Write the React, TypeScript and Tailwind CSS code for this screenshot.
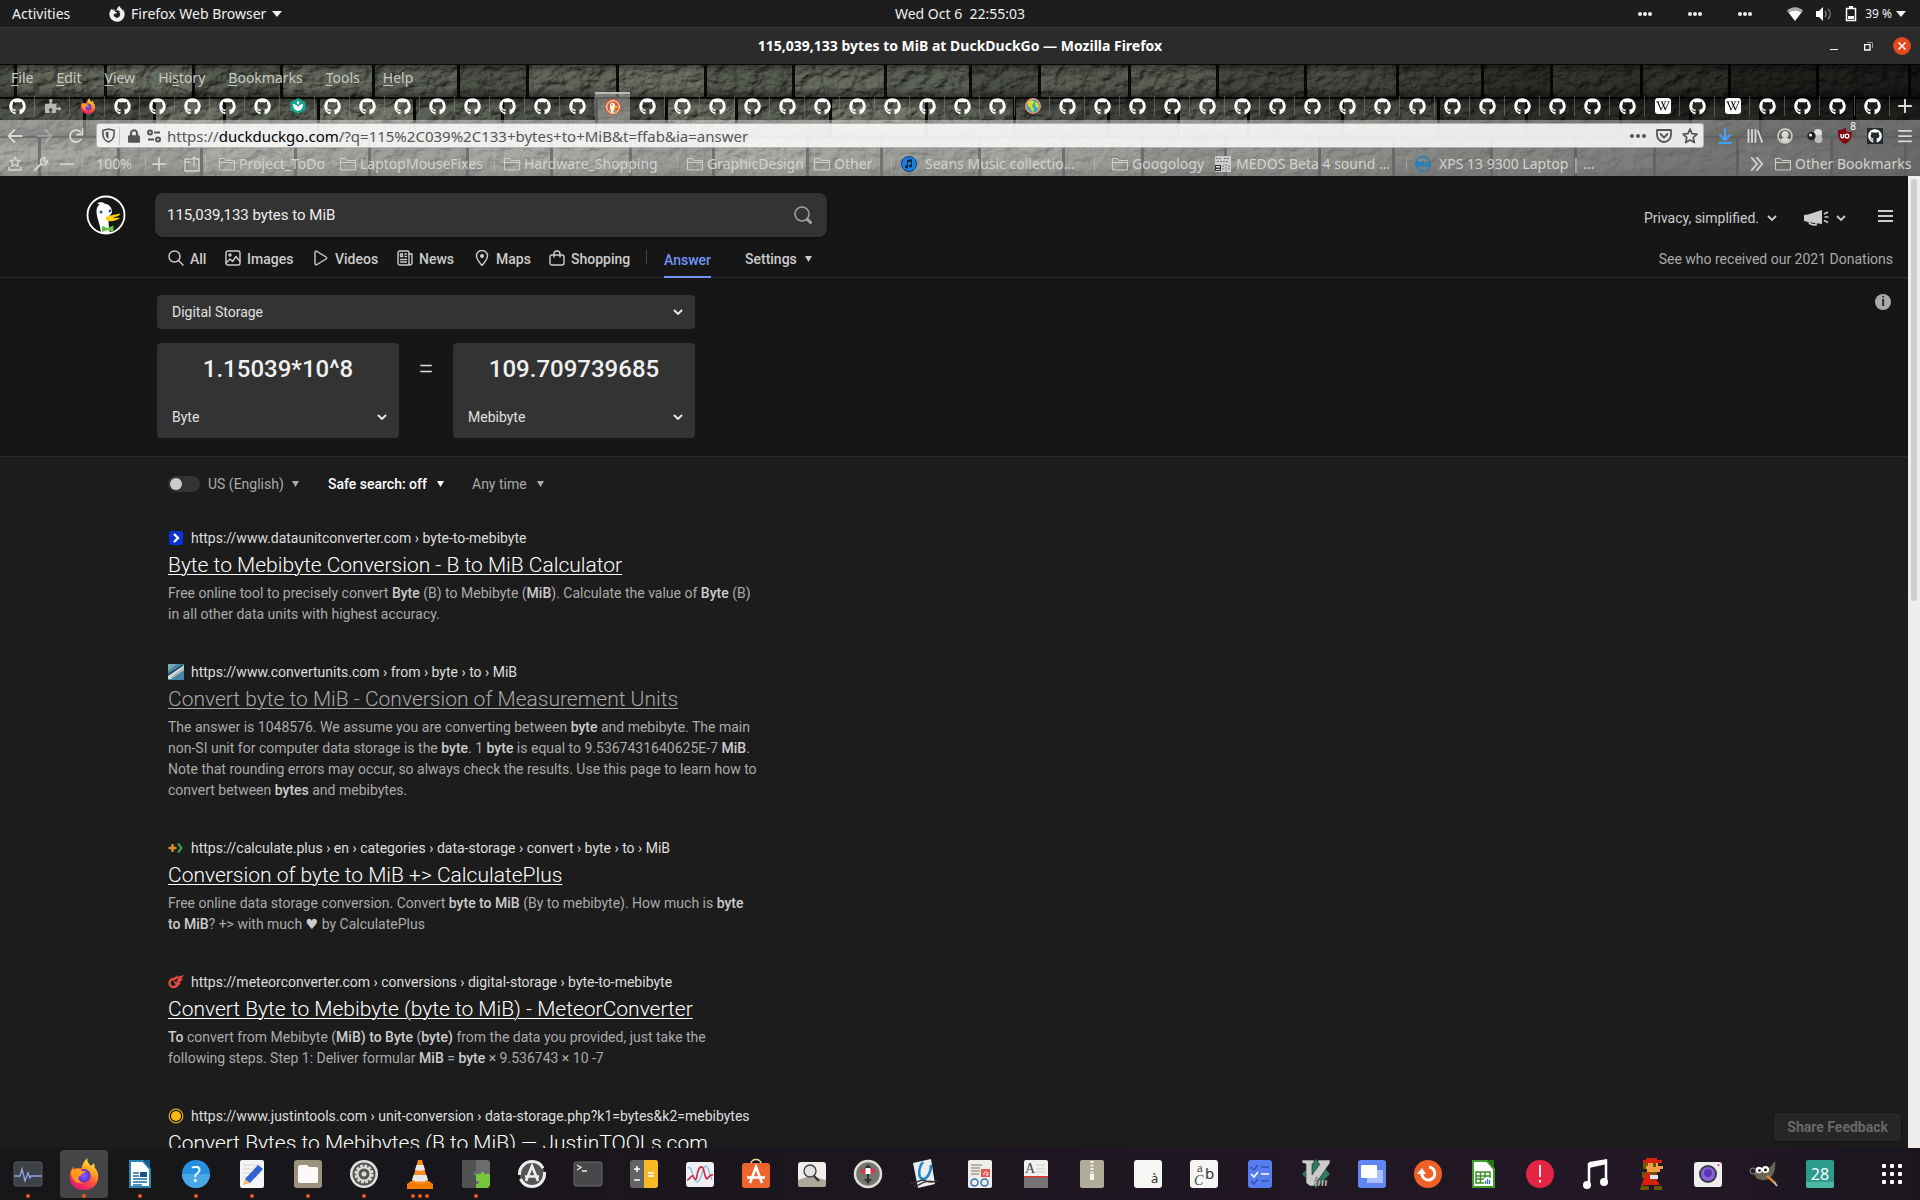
import type { ReactNode } from "react";
import { FaGithub, FaPuzzlePiece, FaLock, FaFirefoxBrowser, FaWikipediaW } from "react-icons/fa";

const UI = "font-['Noto_Sans',sans-serif]";
const WEB = "font-['Roboto',sans-serif]";

/* ---------- stone wall behind the browser chrome ---------- */

const WALL = [
  { y: 1, h: 32, joints: [15, 105, 193, 281, 373, 458], tones: ["#656a5d", "#6e7365", "#5a5f53", "#686d60", "#60655a", "#51564b"] },
  { y: 35, h: 37, joints: [84, 154, 224, 318, 414, 502], tones: ["#4b5046", "#6f7467", "#5d6256", "#757a6b", "#5f6458", "#545950"] },
  { y: 74, h: 38, joints: [39, 118, 201, 295, 369, 467], tones: ["#696e62", "#585d52", "#6f7468", "#64695c", "#5b6055", "#6b7064"] },
];

function StoneWall() {
  return (
    <svg className="absolute inset-0 h-full w-full" aria-hidden="true">
      <defs>
        <filter id="rough" x="0" y="0" width="100%" height="100%" colorInterpolationFilters="sRGB">
          <feTurbulence type="fractalNoise" baseFrequency="0.07 0.1" numOctaves="5" seed="4" result="n" />
          <feDiffuseLighting in="n" surfaceScale="4" lightingColor="#ffffff" result="l">
            <feDistantLight azimuth="225" elevation="62" />
          </feDiffuseLighting>
          <feBlend in="SourceGraphic" in2="l" mode="multiply" />
        </filter>
        <linearGradient id="bevel" x1="0" y1="0" x2="0" y2="1">
          <stop offset="0" stopColor="#000" stopOpacity="0.35" />
          <stop offset="0.25" stopColor="#000" stopOpacity="0" />
          <stop offset="0.7" stopColor="#000" stopOpacity="0" />
          <stop offset="1" stopColor="#000" stopOpacity="0.4" />
        </linearGradient>
        <pattern id="stones" width="512" height="112" patternUnits="userSpaceOnUse">
          <rect width="512" height="112" fill="#0a0b09" />
          {WALL.map((row) =>
            row.joints.map((j, i) => {
              const next = i + 1 < row.joints.length ? row.joints[i + 1] : row.joints[0] + 512;
              return [0, -512].map((o) => (
                <g key={`${row.y}-${i}-${o}`}>
                  <rect x={j + 2 + o} y={row.y} width={next - j - 3} height={row.h} rx="2" fill={row.tones[i]} />
                  <rect x={j + 2 + o} y={row.y} width={next - j - 3} height={row.h} rx="2" fill="url(#bevel)" />
                </g>
              ));
            }),
          )}
        </pattern>
        <linearGradient id="dusk">
          <stop offset="0.5" stopColor="#000" stopOpacity="0" />
          <stop offset="1" stopColor="#000" stopOpacity="0.75" />
        </linearGradient>
      </defs>
      <rect width="100%" height="100%" fill="url(#stones)" filter="url(#rough)" />
      <rect width="100%" height="100%" fill="url(#dusk)" />
    </svg>
  );
}

/* ---------- small glyphs ---------- */

function Caret({ className = "" }: { className?: string }) {
  return (
    <svg viewBox="0 0 10 6" className={`h-[6px] w-[10px] ${className}`} fill="currentColor" aria-hidden="true">
      <path d="M0 0h10L5 6z" />
    </svg>
  );
}

function SmallCaret({ className = "" }: { className?: string }) {
  return (
    <svg viewBox="0 0 7 6" className={`h-[6px] w-[7px] shrink-0 ${className}`} fill="currentColor" aria-hidden="true">
      <path d="M0 0h7L3.5 6z" />
    </svg>
  );
}

function Chevron({ className = "" }: { className?: string }) {
  return (
    <svg viewBox="0 0 10 6" className={`h-[6px] w-[10px] ${className}`} fill="none" stroke="currentColor" strokeWidth="1.8" aria-hidden="true">
      <path d="M1 1l4 4 4-4" />
    </svg>
  );
}

function Icon({ children, size = "size-4", box = "0 0 16 16", className = "" }: { children: ReactNode; size?: string; box?: string; className?: string }) {
  return (
    <svg viewBox={box} className={`${size} shrink-0 ${className}`} fill="none" stroke="currentColor" strokeWidth="1.4" strokeLinecap="round" strokeLinejoin="round" aria-hidden="true">
      {children}
    </svg>
  );
}

function FirefoxLogo({ size }: { size: string }) {
  return (
    <svg viewBox="0 0 32 36" className={size} aria-hidden="true">
      <defs>
        <linearGradient id="ffbody" x1="0.8" y1="0" x2="0.3" y2="1">
          <stop offset="0" stopColor="#fff44f" />
          <stop offset="0.35" stopColor="#ffa51f" />
          <stop offset="0.65" stopColor="#ff4a3c" />
          <stop offset="1" stopColor="#e5127f" />
        </linearGradient>
        <radialGradient id="ffglobe">
          <stop offset="0" stopColor="#9059ff" />
          <stop offset="1" stopColor="#5b2fd0" />
        </radialGradient>
      </defs>
      <path fill="url(#ffbody)" d="M20 0c-1 4 1 6 4 9l3-3c1 2 1 3 1 5 3 3 4 6 4 10 0 9-7 15-16 15S0 30 0 21c0-5 2-9 4-12 0 2 0 3 1 4 2-1 5-2 8-1 1-5 3-9 7-12z" />
      <circle cx="16" cy="20" r="7.5" fill="url(#ffglobe)" />
      <path fill="#ff9a1f" d="M1 16c2-5 7-5 11-3 1 2 4 2 6 2-1 2-3 2-4 3-2 1-2 3-4 3-1 3 1 6 5 7-7 2-13-4-14-12z" />
    </svg>
  );
}

function Duck({ className, body = "#de5833", ring = "#fff" }: { className: string; body?: string; ring?: string }) {
  return (
    <svg viewBox="0 0 40 40" className={className} aria-hidden="true">
      <circle cx="20" cy="20" r="18.500" fill={body} stroke={ring} strokeWidth="1.800" />
      <path fill="#fff" d="M15 37.500C14.500 30 10.500 23 10.500 16c0-3 1-5 3-6.500-1-1-2-1-2.500-1C13 6.500 17 7 18.500 8.500c5 1 7.500 4 7.500 8.500 0 2-3 3-3.500 6 0 4 0 8 1.500 15-3 .8-6 .6-9-.5z" />
      <circle cx="15" cy="17" r="1.500" fill="#2d4f8e" />
      <circle cx="24" cy="16" r="1.400" fill="#2d4f8e" />
      <path fill="#fdd20a" d="M20 22.500c3-3 8-2 14-4 1 1.500-3 3-7 4 2 .8 4 0 7 .6-3 3-10 4-13 2.400-1-1-2-2-1-3z" />
      <path fill="#65bc46" d="M16 31l5.500 2 6-2.500V37l-6-2-5.500 2z" />
    </svg>
  );
}

function Folder() {
  return (
    <Icon size="size-4" className="text-[#d0d0cb]">
      <path strokeWidth="1" d="M.5 13.500v-11h5l1.500 2h8.500v9zM.5 6.500h15" />
    </Icon>
  );
}

/* ---------- desktop top bar and window title ---------- */

function DesktopBar() {
  return (
    <header className={`${UI} grid h-7 shrink-0 grid-cols-3 items-center border-b border-[#3a3a3a] bg-[#1d1d1d] text-sm text-[#f0f0f0]`}>
      <div className="flex items-center pl-3">
        <button className="w-[97px] text-left">Activities</button>
        <button className="flex items-center gap-[6px]">
          <FaFirefoxBrowser className="size-4" />
          Firefox Web Browser
          <Caret />
        </button>
      </div>
      <button className="justify-self-center whitespace-pre">Wed Oct 6  22:55:03</button>
      <div className="flex items-center justify-end pr-[14px]">
        {[0, 1, 2].map((n) => (
          <button key={n} aria-label="Indicator" className="flex w-[50px] justify-center">
            <svg viewBox="0 0 14 4" className="h-1 w-[14px]" fill="currentColor"><circle cx="2" cy="2" r="2" /><circle cx="7" cy="2" r="2" /><circle cx="12" cy="2" r="2" /></svg>
          </button>
        ))}
        <button aria-label="System menu" className="flex items-center pl-[17px] text-xs">
          <svg viewBox="0 0 16 14" className="mr-[13px] h-[14px] w-4"><path fill="#aaa" d="M0 4C4-1 12-1 16 4l-8 9z" /><path fill="#fff" d="M2 6c3-3 9-3 12 0l-6 8z" /></svg>
          <svg viewBox="0 0 16 14" className="mr-[13px] h-[14px] w-4"><path fill="#fff" d="M0 4h3l4-4v14l-4-4H0z" /><path d="M9 4c1.500 2 1.500 4 0 6M12 2c3 3 3 7 0 10" fill="none" stroke="#888" strokeWidth="1.300" /></svg>
          <svg viewBox="0 0 12 16" className="mr-2 h-4 w-3"><path fill="none" stroke="#fff" strokeWidth="1.500" d="M1.500 2.500h9v12h-9z" /><path fill="#fff" d="M4 0h4v2H4zM3 10h6v3H3z" /></svg>
          39 %
          <Caret className="ml-1" />
        </button>
      </div>
    </header>
  );
}

function TitleBar() {
  return (
    <div className={`${UI} grid h-9 shrink-0 grid-cols-[120px_1fr_120px] items-center bg-[#2b2b2b] text-sm text-white`}>
      <span />
      <h1 className="text-center font-bold">115,039,133 bytes to MiB at DuckDuckGo — Mozilla Firefox</h1>
      <div className="flex items-center justify-end gap-4 pr-[9px]">
        <button aria-label="Minimize" className="flex size-[18px] items-end justify-center pb-[5px]"><span className="h-px w-2 bg-white" /></button>
        <button aria-label="Restore" className="flex size-[18px] items-center justify-center">
          <svg viewBox="0 0 9 9" className="size-[9px]" fill="none"><path stroke="#999" d="M3 .5h5.500V6" /><path stroke="#fff" strokeWidth="1.300" d="M.6 2.600h5.400v5.400H.6z" /></svg>
        </button>
        <button aria-label="Close" className="flex size-[18px] items-center justify-center rounded-full bg-[#e2491d]">
          <svg viewBox="0 0 8 8" className="size-2" stroke="#fff" strokeWidth="1.500"><path d="M.5.5l7 7M7.500.5l-7 7" /></svg>
        </button>
      </div>
    </div>
  );
}

/* ---------- browser chrome ---------- */

const MENUS = ["File", "Edit", "View", "History", "Bookmarks", "Tools", "Help"];
const MENU_KEYS = [0, 0, 0, 2, 0, 0, 0];

function tabGlyph(i: number) {
  if (i === 1) return <FaPuzzlePiece className="size-4 text-[#b8b8b8]" />;
  if (i === 2) return <FirefoxLogo size="size-4" />;
  if (i === 8)
    return (
      <svg viewBox="0 0 16 16" className="size-4"><path fill="#12a58c" d="M8 0l7.500 4v8L8 16 .5 12V4z" /><path fill="#fff" d="M8 13C4 12 3 9 3 6c2 0 4 1 5 3 1-2 3-3 5-3 0 3-1 6-5 7zM6.500 4.500L8 3l1.500 1.500L8 7z" /></svg>
    );
  if (i === 17)
    return (
      <svg viewBox="0 0 16 16" className="size-4"><circle cx="8" cy="8" r="8" fill="#de5833" /><circle cx="8" cy="8" r="6.300" fill="#de5833" stroke="#fff" /><path fill="#fff" d="M6 13.500C5.500 10 4.500 8 5 5.500 5.500 3 9.500 3 10 6c.2 1.500-.8 2-.8 3.500L10 13.500c-1 .5-3 .5-4 0z" /><circle cx="7" cy="6" r=".7" fill="#234" /><path fill="#fdd20a" d="M8.500 8c1.500-.8 3-.6 4.500-1-.5 2-3 3-4.500 2z" /><path fill="#65bc46" d="M8 11.500h3v2H8z" /></svg>
    );
  if (i === 29)
    return (
      <svg viewBox="0 0 16 16" className="size-4"><circle cx="8" cy="8" r="7.200" fill="#3aa6c9" stroke="#f09a6f" strokeWidth="1.500" /><path fill="#d9e021" d="M4 3c2-1 4-1 5 1 0 2-2 2-2 4l2 3-1 3c-2-1-2-4-4-5-2-2-1-5 0-6zM10 4l3 1 1 4-2 1-2-3z" /></svg>
    );
  if (i === 47 || i === 49)
    return <span className="flex size-4 items-center justify-center rounded-[3px] bg-white"><FaWikipediaW className="size-[14px] text-black" /></span>;
  return <FaGithub className="size-[17px] text-white" />;
}

function TabStrip() {
  return (
    <div role="tablist" className="flex h-7 items-stretch text-[#ddd]">
      {Array.from({ length: 54 }, (_, i) => (
        <button
          key={i}
          role="tab"
          aria-selected={i === 17}
          aria-label={`Tab ${i + 1}`}
          className={
            i === 17
              ? "flex w-[35px] min-w-0 items-center justify-center border-t-2 border-[#bbb] bg-white/35"
              : "flex w-[35px] min-w-0 items-center justify-center bg-[linear-gradient(#88888880,#88888880)] bg-[length:1px_20px] bg-right bg-no-repeat"
          }
        >
          {tabGlyph(i)}
        </button>
      ))}
      <button aria-label="New tab" className="flex flex-1 items-center justify-center">
        <Icon size="size-[14px]"><path strokeWidth="2.200" d="M8 1v14M1 8h14" /></Icon>
      </button>
    </div>
  );
}

function NavBar() {
  return (
    <div className="flex h-[31px] items-center text-[#d8d8d4]">
      <button aria-label="Back" className="flex w-[30px] justify-center"><Icon><path strokeWidth="1.800" d="M15 8H1.500M7.500 2l-6 6 6 6" /></Icon></button>
      <button aria-label="Forward" className="flex w-[30px] justify-center opacity-40"><Icon><path strokeWidth="1.800" d="M1 8h13.500M8.500 2l6 6-6 6" /></Icon></button>
      <button aria-label="Reload" className="flex w-8 justify-center"><Icon><path strokeWidth="1.800" d="M13 11.500A6 6 0 1 1 12.500 4M14.500 1v5.500H9" /></Icon></button>
      <div className="ml-1 flex h-[25px] min-w-0 flex-1 items-center rounded-[3px] border border-black/25 bg-white/85 text-[#555]">
        <span className="flex w-[22px] justify-center">
          <svg viewBox="0 0 14 16" className="h-[15px] w-[13px]"><path d="M7 1l6 1.500v4C13 11 10 14 7 15 4 14 1 11 1 6.500v-4z" fill="none" stroke="currentColor" strokeWidth="1.700" /><path d="M7 4v8C5 10.500 4 9 4 6.500V4.500z" fill="currentColor" /></svg>
        </span>
        <span className="h-[18px] w-px bg-black/15" />
        <FaLock className="ml-2 h-[14px] w-3" />
        <svg viewBox="0 0 14 14" className="mr-[6px] ml-[7px] size-[14px]" fill="none" stroke="currentColor" strokeWidth="2"><circle cx="3" cy="3.500" r="2" /><path d="M7 3.500h6M1 10.500h6" /><circle cx="11" cy="10.500" r="2" /></svg>
        <div className={`${UI} relative min-w-0 flex-1 text-[15px]`}>
          <p className="leading-5 whitespace-pre">https://<b className="font-normal text-black">duckduckgo.com</b>/?q=115%2C039%2C133+bytes+to+MiB&amp;t=ffab&amp;ia=answer</p>
          <input aria-label="Address" className="absolute inset-0 w-full bg-transparent outline-none" />
        </div>
        <button aria-label="Page actions" className="flex w-[26px] justify-center"><svg viewBox="0 0 16 4" className="h-1 w-4" fill="currentColor"><circle cx="2" cy="2" r="2" /><circle cx="8" cy="2" r="2" /><circle cx="14" cy="2" r="2" /></svg></button>
        <button aria-label="Save to Pocket" className="flex w-[26px] justify-center"><Icon><path strokeWidth="1.800" d="M1 2h14v5a7 7 0 0 1-14 0zM4.500 6L8 9.500 11.500 6" /></Icon></button>
        <button aria-label="Bookmark this page" className="flex w-[26px] justify-center"><Icon><path strokeWidth="1.700" d="M8 1l2 4.700 5 .5-3.800 3.400 1.200 5L8 12l-4.400 2.600 1.200-5L1 6.200l5-.5z" /></Icon></button>
      </div>
      <div className="flex pl-[6px]">
        <button aria-label="Downloads" className="flex w-[30px] items-center justify-center text-[#45a1ff]"><Icon><path strokeWidth="2" d="M8 1v10M3 7l5 5 5-5M2 15h12" /></Icon></button>
        <button aria-label="Library" className="flex w-[30px] items-center justify-center"><Icon><path strokeWidth="1.800" d="M1.500 2v12M5 2v12M8.500 2v12M11 3l4 11" /></Icon></button>
        <button aria-label="Account" className="flex w-[30px] items-center justify-center"><Icon><circle cx="8" cy="8" r="7" /><circle cx="8" cy="6.500" r="2.800" fill="currentColor" /><path fill="currentColor" d="M4 12c1-2 7-2 8 0-2 2-6 2-8 0z" /></Icon></button>
        <button aria-label="Extension" className="flex w-[30px] items-center justify-center"><svg viewBox="0 0 16 16" className="size-4"><circle cx="11" cy="5" r="4" fill="#ddd" /><circle cx="11.500" cy="11" r="4" fill="#bbb" /><circle cx="4.500" cy="8" r="4.200" fill="#222" /><circle cx="3.500" cy="7" r="1.500" fill="#eee" /></svg></button>
        <button aria-label="uBlock Origin" className="relative flex w-[30px] items-center justify-center">
          <svg viewBox="0 0 16 16" className="size-4"><path fill="#800610" d="M8 0c2 1.500 4.500 2 7 2 0 7-1 11-7 14C2 13 1 9 1 2c2.500 0 5-.5 7-2z" /><path d="M4 6v2.500a1.300 1.300 0 0 0 2.600 0V6" fill="none" stroke="#fff" strokeWidth="1.400" /><circle cx="10" cy="8" r="1.900" fill="none" stroke="#fff" strokeWidth="1.400" /></svg>
          <span className={`${UI} absolute -top-2 right-0 rounded-xs bg-[#666] px-1 text-[10px] leading-[12px] text-white`}>8</span>
        </button>
        <button aria-label="GitHub" className="flex w-[30px] items-center justify-center"><span className="bg-[#24292e] p-px"><FaGithub className="size-[14px] text-white" /></span></button>
        <button aria-label="Menu" className="flex w-[30px] items-center justify-center"><Icon size="size-[14px]"><path strokeWidth="2" d="M1 2h14M1 8h14M1 14h14" /></Icon></button>
      </div>
    </div>
  );
}

function Rule() {
  return <span className="h-4 w-px shrink-0 bg-white/20" />;
}

function Mark({ width, icon, children }: { width: string; icon: ReactNode; children: ReactNode }) {
  return (
    <button className={`flex ${width} shrink-0 items-center gap-1 whitespace-nowrap`}>
      {icon}
      {children}
    </button>
  );
}

function BookmarksBar() {
  return (
    <div className={`${UI} flex h-[25px] items-center text-sm text-[#d3d3cf] [text-shadow:1px_1px_1px_#000]`}>
      <button aria-label="Bookmarks" className="flex w-[30px] justify-center"><Icon><path d="M8 1l1.500 3.200 3.500.4-2.600 2.300.8 3.400L8 8.600l-3.200 1.700.8-3.400L3 4.600l3.500-.4zM2 11v3h12v-3" /></Icon></button>
      <button aria-label="Tools" className="flex w-[22px] justify-center"><Icon><path strokeWidth="2.200" d="M2 14l6.500-6.500" /><path strokeWidth="1.800" d="M12.500 2a3.500 3.500 0 1 0 2 2.500L12 6l-1.500-1.500z" /></Icon></button>
      <button aria-label="Zoom out" className="flex w-[30px] justify-center"><Icon size="size-[14px]"><path strokeWidth="2" d="M1 8h14" /></Icon></button>
      <Rule />
      <button className="w-[62px] text-center">100%</button>
      <Rule />
      <button aria-label="Zoom in" className="flex w-[26px] justify-center"><Icon size="size-[14px]"><path strokeWidth="2" d="M8 1v14M1 8h14" /></Icon></button>
      <button aria-label="Open file" className="flex w-[33px] justify-end pr-[5px]"><Icon><path d="M6 3H1v12h14V3h-2M1 6h5M10 10V1M7.500 3.500L10 1l2.500 2.500" /></Icon></button>
      <Rule />
      <span className="w-[13px]" />
      <Mark width="w-[121px]" icon={<Folder />}>Project_ToDo</Mark>
      <Mark width="w-[154px]" icon={<Folder />}>LaptopMouseFixes</Mark>
      <Rule />
      <span className="w-[9px]" />
      <Mark width="w-[173px]" icon={<Folder />}>Hardware_Shopping</Mark>
      <Rule />
      <span className="w-[9px]" />
      <Mark width="w-[127px]" icon={<Folder />}>GraphicDesign</Mark>
      <Mark width="w-[77px]" icon={<Folder />}>Other</Mark>
      <Rule />
      <span className="w-[9px]" />
      <Mark
        width="w-[193px]"
        icon={<svg viewBox="0 0 16 16" className="mr-1 size-4"><circle cx="8" cy="8" r="7.500" fill="#1b7fe0" stroke="#0b3d87" /><path fill="#123" d="M6 4l5-1v7a1.500 1.500 0 1 1-1-1.500V5.500l-3 .7V11a1.500 1.500 0 1 1-1-1.500z" /></svg>}
      >
        Seans Music collectio…
      </Mark>
      <Rule />
      <span className="w-[17px]" />
      <Mark width="w-[103px]" icon={<Folder />}>Googology</Mark>
      <Mark
        width="w-[191px]"
        icon={<svg viewBox="0 0 16 16" className="mr-px size-4"><path fill="#ccc" d="M0 0h16v16H0z" /><path stroke="#777" d="M1 2.500h6M9 2.500h5M2 5.500h12M8 9v6M11 8v7M14 9v5" strokeDasharray="2 1" /><path fill="#333" d="M0 9h6v6H0z" /><path fill="#ddd" d="M1 10h4v1.500H1zM1 13h4v1H1z" /></svg>}
      >
        MEDOS Beta 4 sound …
      </Mark>
      <Rule />
      <span className="w-2" />
      <Mark
        width="w-[190px]"
        icon={<svg viewBox="0 0 16 16" className="mr-1 size-4"><circle cx="8" cy="8" r="7.300" fill="none" stroke="#0a80c8" strokeWidth="1.200" /><path stroke="#0a80c8" strokeWidth="1.400" fill="none" d="M2.500 6v4c3 0 3-4 0-4zM6.500 6v4M6.500 6H9M6.500 8H8.500M6.500 10H9M10.500 6v4h1.500M13 6v4h1.500" /></svg>}
      >
        XPS 13 9300 Laptop | …
      </Mark>
      <button aria-label="More bookmarks" className="ml-auto flex w-[25px] items-center"><Icon size="size-[14px]"><path strokeWidth="2" d="M2 1l6 7-6 7M8 1l6 7-6 7" /></Icon></button>
      <Mark width="w-[145px]" icon={<Folder />}>Other Bookmarks</Mark>
    </div>
  );
}

function BrowserChrome() {
  return (
    <div className="relative h-28 shrink-0 overflow-hidden bg-[#3a3d35]">
      <StoneWall />
      <div className="relative">
        <nav aria-label="Menu bar" className={`${UI} flex h-7 items-center gap-[23px] pl-[11px] text-sm text-[#c9c9c5] [text-shadow:1px_1px_1px_#000]`}>
          {MENUS.map((m, i) => (
            <button key={m}>
              {m.slice(0, MENU_KEYS[i])}
              <span className="underline underline-offset-2">{m[MENU_KEYS[i]]}</span>
              {m.slice(MENU_KEYS[i] + 1)}
            </button>
          ))}
        </nav>
        <TabStrip />
        <div className="bg-[linear-gradient(90deg,#ffffff6b,#ffffff6b_50%,#ffffff5c)]">
          <NavBar />
          <BookmarksBar />
        </div>
      </div>
    </div>
  );
}

/* ---------- search page ---------- */

const VERTICALS: { label: string; width: string; icon: ReactNode }[] = [
  { label: "All", width: "w-[57px]", icon: <><circle cx="6.500" cy="6.500" r="5.500" /><path d="M10.500 10.500L15 15" /></> },
  { label: "Images", width: "w-[88px]", icon: <><rect x="1" y="1" width="14" height="14" rx="2" /><circle cx="5" cy="5" r="1" /><path d="M1 13l4-4 2.500 2.500L11 6.500l4 5" /></> },
  { label: "Videos", width: "w-[84px]", icon: <path d="M2 2.500v11c0 1 1 1.500 2 1l9-5.500c1-.6 1-1.400 0-2L4 1.500c-1-.5-2 0-2 1z" /> },
  { label: "News", width: "w-[77px]", icon: <><rect x="1" y="1" width="11" height="14" rx="2" /><path d="M12 4h3v9c0 1-1 2-3 2M3.500 4h2v2.500h-2zM8 4h1.500M8 6.500h1.500M3.500 9.500h6M3.500 12h6" /></> },
  { label: "Maps", width: "w-[75px]", icon: <><path d="M8 15.500C5 12 2.500 9 2.500 6a5.500 5.500 0 0 1 11 0c0 3-2.500 6-5.500 9.500z" /><circle cx="8" cy="6" r="1.300" fill="currentColor" /></> },
  { label: "Shopping", width: "w-[97px]", icon: <><rect x="1" y="5" width="14" height="10" rx="2" /><path d="M5 7V4a3 3 0 0 1 6 0v3" /></> },
];

function SearchHeader() {
  return (
    <header className="flex border-b border-[#2b2b2b] pt-[17px]">
      <a href="#home" aria-label="Home" className="ml-[86px] h-10 w-[69px] pt-[2px]"><Duck className="size-10" body="#161616" /></a>
      <div>
        <form className="flex h-11 w-[672px] items-center rounded-lg bg-[#333] pr-[15px] pl-3 shadow-[0_1px_3px_#0006]">
          <input aria-label="Search" defaultValue="115,039,133 bytes to MiB" className="min-w-0 flex-1 bg-transparent text-[15px] text-[#eee] outline-none" />
          <button type="button" aria-label="Search" className="text-[#a3a3a3]">
            <Icon size="size-[18px]" box="0 0 18 18"><circle cx="8" cy="8" r="7" strokeWidth="1.500" /><path strokeWidth="3" d="M13.500 13.500l3 3" /></Icon>
          </button>
        </form>
        <nav className="flex h-10 items-center pl-[13px] text-sm font-medium text-[#ccc]">
          {VERTICALS.map((v) => (
            <a key={v.label} href={`#${v.label}`} className={`flex ${v.width} gap-[6px] pt-1`}>
              <Icon>{v.icon}</Icon>
              <span className="leading-[18px]">{v.label}</span>
            </a>
          ))}
          <span className="mr-[17px] h-[14px] w-px bg-[#444]" />
          <a href="#answer" className="-mb-px flex h-full items-center self-end border-b-2 border-[#7295f6] pt-[6px] text-[#7295f6]">Answer</a>
          <button className="ml-[34px] flex items-center gap-2 pt-1">Settings <SmallCaret /></button>
        </nav>
      </div>
      <div className="ml-auto flex flex-col items-end pr-[15px] text-sm">
        <div className="flex h-[50px] items-center text-[#ccc]">
          <button className="flex items-center gap-2">Privacy, simplified. <Chevron /></button>
          <button aria-label="Spread the word" className="ml-[27px] flex items-center gap-[6px]">
            <svg viewBox="0 0 26 16" className="h-4 w-[26px]" fill="currentColor"><path d="M0 5L4 4.500 18 0v14L4 12l-4-1z" /><path d="M5.500 11v2.500c2 1 4 1.500 6.500 1.500v-3M20 4l4-2M20.500 7h4M20 10.500l4 2" fill="none" stroke="currentColor" strokeWidth="1.600" /></svg>
            <Chevron />
          </button>
          <button aria-label="Menu" className="ml-8 flex flex-col gap-[3px] pb-1"><span className="h-[2px] w-[15px] bg-current" /><span className="h-[2px] w-[15px] bg-current" /><span className="h-[2px] w-[15px] bg-current" /></button>
        </div>
        <a href="#donations" className="pt-[6px] text-[#aaa]">See who received our 2021 Donations</a>
      </div>
    </header>
  );
}

function UnitPanel({ id, label, value, unit }: { id: string; label: string; value: string; unit: string }) {
  return (
    <div className="h-[95px] w-[242px] rounded bg-[#333]">
      <input aria-label={label} defaultValue={value} className="h-[52px] w-full bg-transparent text-center text-2xl font-medium text-[#f0f0f0] outline-none" />
      <UnitSelect id={id} label={`${label} unit`} value={unit} height="h-[43px]" />
    </div>
  );
}

function UnitSelect({ id, label, value, height }: { id: string; label: string; value: string; height: string }) {
  return (
    <div className="relative flex items-center">
      <select id={id} aria-label={label} className={`${height} w-full appearance-none rounded bg-[#333] pl-[15px] text-sm text-[#e0e0e0] outline-none`}>
        <option>{value}</option>
      </select>
      <Chevron className="pointer-events-none absolute right-3 text-[#eee]" />
    </div>
  );
}

function Converter() {
  return (
    <section className="flex justify-between border-b border-[#2b2b2b] pt-4 pr-[17px] pb-[18px] pl-[157px]">
      <div className="flex w-[538px] flex-col gap-[14px] pt-px">
        <UnitSelect id="kind" label="Quantity" value="Digital Storage" height="h-[34px]" />
        <div className="flex justify-between">
          <UnitPanel id="from" label="From" value="1.15039*10^8" unit="Byte" />
          <span className="pt-2 text-[28px] leading-9 font-light text-[#ddd]">=</span>
          <UnitPanel id="to" label="To" value="109.709739685" unit="Mebibyte" />
        </div>
      </div>
      <button aria-label="About this answer" className="flex size-4 items-center justify-center rounded-full bg-[#aaa] text-xs font-bold text-[#161616]">i</button>
    </section>
  );
}

function Filters() {
  return (
    <div className="flex h-4 items-center text-sm text-[#aaa]">
      <input
        type="checkbox"
        aria-label="Region filter"
        className="mr-2 h-4 w-8 appearance-none rounded-full bg-[#333] before:m-[2px] before:block before:size-3 before:rounded-full before:bg-[#ccc]"
      />
      <button className="flex w-[120px] items-center gap-2">US (English) <SmallCaret /></button>
      <button className="flex w-36 items-center gap-[10px] font-medium text-white">Safe search: off <SmallCaret /></button>
      <button className="flex items-center gap-[10px]">Any time <SmallCaret /></button>
    </div>
  );
}

const B = ({ children }: { children: ReactNode }) => <b className="font-medium text-[#ccc]">{children}</b>;

const RESULTS: { url: string; title: string; visited?: boolean; icon: ReactNode; lines: ReactNode[] }[] = [
  {
    url: "https://www.dataunitconverter.com › byte-to-mebibyte",
    title: "Byte to Mebibyte Conversion - B to MiB Calculator",
    icon: <><rect x="1" y="1" width="14" height="14" rx="2" fill="#0b33d1" /><path d="M6 4l4 4-4 4" fill="none" stroke="#fff" strokeWidth="2.400" /></>,
    lines: [
      <>Free online tool to precisely convert <B>Byte</B> (B) to Mebibyte (<B>MiB</B>). Calculate the value of <B>Byte</B> (B)</>,
      <>in all other data units with highest accuracy.</>,
    ],
  },
  {
    url: "https://www.convertunits.com › from › byte › to › MiB",
    title: "Convert byte to MiB - Conversion of Measurement Units",
    visited: true,
    icon: <><path fill="#4487a5" d="M0 0h16v16H0z" /><path fill="#7fa6b5" d="M0 0h9L0 7z" /><path fill="#d5d8d8" d="M16 1v5L3 15H0v-3z" /><path stroke="#1d3f57" strokeWidth="1.500" d="M0 11L15 1" /><path stroke="#8b9498" d="M3 14l13-10" /></>,
    lines: [
      <>The answer is 1048576. We assume you are converting between <B>byte</B> and mebibyte. The main</>,
      <>non-SI unit for computer data storage is the <B>byte</B>. 1 <B>byte</B> is equal to 9.5367431640625E-7 <B>MiB</B>.</>,
      <>Note that rounding errors may occur, so always check the results. Use this page to learn how to</>,
      <>convert between <B>bytes</B> and mebibytes.</>,
    ],
  },
  {
    url: "https://calculate.plus › en › categories › data-storage › convert › byte › to › MiB",
    title: "Conversion of byte to MiB +> CalculatePlus",
    icon: <><path d="M4.500 4v8M.5 8h8" stroke="#e08a2c" strokeWidth="2.400" /><path d="M10 3.500l3.500 4.500-3.500 4.500" fill="none" stroke="#35a04c" strokeWidth="2.200" /></>,
    lines: [
      <>Free online data storage conversion. Convert <B>byte to MiB</B> (By to mebibyte). How much is <B>byte</B></>,
      <><B>to MiB</B>? +&gt; with much <span className="font-['DejaVu_Sans'] text-[#ccc]">♥</span> by CalculatePlus</>,
    ],
  },
  {
    url: "https://meteorconverter.com › conversions › digital-storage › byte-to-mebibyte",
    title: "Convert Byte to Mebibyte (byte to MiB) - MeteorConverter",
    icon: <><circle cx="5.500" cy="9" r="4" fill="none" stroke="#e34b3a" strokeWidth="2.400" /><path fill="#e34b3a" d="M4 5l6-4-1 2 7-2-3 4h2l-4 4h2l-4 4z" /><path fill="#1c1c1c" d="M5 7l5-3-1 4z" /></>,
    lines: [
      <><B>To</B> convert from Mebibyte (<B>MiB) to Byte</B> (<B>byte)</B> from the data you provided, just take the</>,
      <>following steps. Step 1: Deliver formular <B>MiB</B> = <B>byte</B> × 9.536743 × 10 -7</>,
    ],
  },
  {
    url: "https://www.justintools.com › unit-conversion › data-storage.php?k1=bytes&k2=mebibytes",
    title: "Convert Bytes to Mebibytes (B to MiB) — JustinTOOLs.com",
    icon: <><circle cx="8" cy="8" r="6.800" fill="#111" stroke="#d9b21c" strokeWidth="1.200" /><circle cx="8" cy="8" r="5" fill="#fdb813" /></>,
    lines: [],
  },
];

function Results() {
  return (
    <div className="flex flex-col gap-[35px]">
      {RESULTS.map((r) => (
        <article key={r.url}>
          <div className="flex h-6 items-center gap-[7px] text-sm text-[#dedede]">
            <svg viewBox="0 0 16 16" className="size-4 shrink-0" aria-hidden="true">{r.icon}</svg>
            <a href={r.url.split(" ")[0]} className="whitespace-nowrap">{r.url}</a>
          </div>
          <h2 className="h-[33px] text-[21px] leading-[30px] font-light whitespace-nowrap">
            <a href={r.url.split(" ")[0]} className={r.visited ? "text-[#a8a8a8] underline decoration-1 underline-offset-2" : "text-white underline decoration-1 underline-offset-2"}>{r.title}</a>
          </h2>
          <p className="text-sm leading-[21px] text-[#aaa]">
            {r.lines.map((l, i) => <span key={i} className="block whitespace-nowrap">{l}</span>)}
          </p>
        </article>
      ))}
    </div>
  );
}

function SearchPage() {
  return (
    <div className={`${WEB} relative flex min-h-0 flex-1 overflow-hidden bg-[#1c1c1c]`}>
      <main className="min-w-0 flex-1">
        <div className="bg-[#161616]">
          <SearchHeader />
          <Converter />
        </div>
        <div className="flex flex-col gap-[34px] pt-[19px] pl-[168px]">
          <Filters />
          <Results />
        </div>
      </main>
      <div className="w-3 shrink-0 bg-[#f0eeed] px-[3px] pt-[3px]"><div className="h-[422px] rounded-full bg-[#cecece]" /></div>
      <button className="absolute right-[19px] bottom-[7px] h-7 rounded bg-[#262626] px-[13px] text-sm font-bold text-[#686868] shadow-[0_1px_3px_#0006]">Share Feedback</button>
    </div>
  );
}

/* ---------- dock ---------- */

const DOCK: { name: string; dots?: number; art: ReactNode }[] = [
  { name: "System Monitor", dots: 1, art: <><rect x="0" y="2" width="28" height="24" rx="2" fill="#3d4046" stroke="#55585e" /><path d="M0 16h6l2-7 3 12 3-8 2 5 1-2h11" fill="none" stroke="#8fa5e0" strokeWidth="1.400" /></> },
  { name: "Firefox", dots: 1, art: null },
  { name: "Writer", dots: 1, art: <><path fill="#fff" stroke="#2a84b8" strokeWidth="2" d="M4 1h13l7 8v18H4z" /><path fill="#0f5f95" d="M18 0h6v7z" /><path d="M7 13h6M7 16h6M7 19h14M7 22h14M7 25h9" stroke="#1c6ea4" strokeWidth="1.500" /><path fill="#17557e" d="M14 12h7v5h-7z" /></> },
  { name: "Help", dots: 1, art: <><circle cx="14" cy="14" r="14" fill="#258fe0" /><path fill="#4aa7e6" d="M0 14h28a14 14 0 0 1-28 0z" /><text x="14" y="22" fontSize="22" textAnchor="middle" fill="#fff" className="font-['Noto_Sans']">?</text></> },
  { name: "Text Editor", dots: 1, art: <><rect x="2" y="0" width="24" height="28" rx="2" fill="#f4f4f4" /><path d="M5 5h18M5 9h18M5 13h18M5 17h14" stroke="#d5d5d5" /><path fill="#2f62d2" d="M20 5l5 4-13 14-5-4z" /><path fill="#f3b66d" d="M7 19l5 4-7 2z" /></> },
  { name: "Files", dots: 1, art: <><rect width="28" height="28" rx="3" fill="#9b917e" /><path fill="#fbfaf8" d="M4 8c0-2 1-3 2-3h7l2 2h7c2 0 2 1 2 2v12c0 2-1 2-2 2H6c-1 0-2-1-2-2z" /></> },
  { name: "Settings", dots: 1, art: <><circle cx="14" cy="14" r="14" fill="#e1e0de" /><circle cx="14" cy="14" r="11.500" fill="#55544f" /><circle cx="14" cy="14" r="8" fill="none" stroke="#dedddb" strokeWidth="3" strokeDasharray="2.800 1.400" /><circle cx="14" cy="14" r="6.500" fill="none" stroke="#dedddb" strokeWidth="2" /><circle cx="14" cy="14" r="2.500" fill="#dedddb" /></> },
  { name: "VLC", dots: 3, art: <><path fill="#f57c00" d="M1 24l4-3h18l4 3v5H1z" /><path fill="#fb8c1e" d="M12 0h4l6 22c-4 3-12 3-16 0z" /><path fill="#e8e8e8" d="M10.500 5h7l1.500 5c-3 1-7 1-10 0zM7.500 15h13l1.500 5c-4 2-12 2-16 0z" /></> },
  { name: "Extensions", dots: 1, art: <><rect width="28" height="28" rx="3" fill="#6c6c6c" /><path fill="#515151" d="M0 0h14v11l-3 1 1 4 2-1v13H3l-3-3z" /><path fill="#76c63c" d="M14 14h5c-1-3 4-3 3 0h6v11l-3 3H14v-4c4 1 4-4 0-3z" /></> },
  { name: "Software Updater", art: <><circle cx="14" cy="14" r="12.500" fill="#555" stroke="#eee" strokeWidth="3" strokeDasharray="34 4" /><path d="M8 21l6-15 6 15M7 16.500h14" fill="none" stroke="#eee" strokeWidth="2.600" /></> },
  { name: "Terminal", art: <><rect x="0" y="2" width="28" height="24" rx="2" fill="#48484a" stroke="#68686a" /><path d="M3 5l4 2.500-4 2.500M8 11h5" fill="none" stroke="#eee" strokeWidth="1.300" /></> },
  { name: "Calculator", art: <><rect width="28" height="28" rx="3" fill="#636363" /><path fill="#f9b926" d="M14 0h11c2 0 3 1 3 3v22c0 2-1 3-3 3H14z" /><path d="M4 9h6M7 6v6M4 20h6M18 13h6M18 16h6" stroke="#fff" strokeWidth="1.400" /></> },
  { name: "Plotter", art: <><rect y="2" width="28" height="25" rx="3" fill="#efefef" /><path d="M2 8c4-4 5 14 9 14 5 0 5-16 9-16 3 0 3 8 6 14" fill="none" stroke="#8fc0e6" strokeWidth="1.600" /><path d="M1 20c3 0 4-5 6-4 2 4 3 5 4 0 1-8 4-11 6-8 2 4 1 9 4 11 2-2 3-5 6-4" fill="none" stroke="#d3244b" strokeWidth="1.600" /></> },
  { name: "Software", art: <><path d="M9 4c0-6 10-6 10 0" fill="none" stroke="#f3d7a6" strokeWidth="1.600" /><rect y="3" width="28" height="25" rx="3" fill="#ee6530" /><path d="M8 23l6-16 6 16M5 17.500h18" fill="none" stroke="#fff" strokeWidth="2.600" /></> },
  { name: "Image Viewer", art: <><rect y="2" width="28" height="25" rx="3" fill="#f0efec" /><path fill="#aaa899" d="M0 20l12-4 16 4v4c0 2-1 3-3 3H3c-2 0-3-1-3-3z" /><circle cx="12" cy="11" r="6" fill="#e0e3e2" stroke="#444" strokeWidth="1.400" /><path d="M16 16l5 5" stroke="#333" strokeWidth="2.400" /></> },
  { name: "Disks", art: <><circle cx="14" cy="14" r="13" fill="#77776f" stroke="#dededa" strokeWidth="2.500" /><path fill="#333" d="M14 4l4 5h-3v10h3l-4 5-4-5h3V9h-3z" /><path fill="#e33244" d="M7 9h14v4H7z" /><path fill="#fff" d="M11.500 8h5v6h-5z" /></> },
  { name: "Notes", art: <><path fill="#eceeee" d="M3 3l18-4 4 25-17 4z" /><path d="M13 2c-5 6-5 16 0 17 4 0 8-6 8-14" fill="none" stroke="#2287c4" strokeWidth="2.600" /><path d="M0 23c8 1 10-5 16-2 5 2 8 1 12 0M4 27c6-2 12-8 20-5" fill="none" stroke="#333" strokeWidth="1.400" /></> },
  { name: "Document Viewer", art: <><rect x="2" width="24" height="28" rx="2" fill="#efede9" /><path d="M5 5h11M5 8h9M5 11h9M5 14h8" stroke="#a49f8c" strokeWidth="1.300" /><path fill="#e5564a" d="M15 9h9v8h-9z" /><path d="M18 15c-1-4 4-4 4-1s-2 1-2 0" fill="none" stroke="#fff" /><circle cx="8.500" cy="22.500" r="3.500" fill="none" stroke="#3473b4" strokeWidth="1.500" /><circle cx="18.500" cy="22.500" r="3.500" fill="none" stroke="#3473b4" strokeWidth="1.500" /></> },
  { name: "Dictionary", art: <><rect x="2" width="24" height="28" rx="2" fill="#f1f1f0" /><path fill="#767676" d="M2 16h24v10c0 1-1 2-2 2H4c-1 0-2-1-2-2z" /><path fill="#d33" d="M2 16h24v1.500H2z" /><text x="3" y="13" fontSize="14" fill="#444" className="font-['Liberation_Serif']">A</text><path d="M14 5h9M14 9h9M14 12h9" stroke="#ccc" /></> },
  { name: "Archive Manager", art: <><rect x="2" width="24" height="28" rx="2" fill="#b1ac97" /><path d="M14 1v18" stroke="#eee" strokeWidth="3" strokeDasharray="2 1.500" /><path fill="#f5f5f0" d="M12 14h4v6h-4z" /></> },
  { name: "Character Map", art: <><rect width="28" height="28" rx="3" fill="#f6f6f5" /><text x="17" y="23" fontSize="13" fill="#333" className="font-['Noto_Sans']">à</text></> },
  { name: "Fonts", art: <><rect width="28" height="28" rx="3" fill="#f6f6f5" /><text x="7" y="12" fontSize="13" fill="#444" className="font-['Liberation_Serif']">a</text><text x="15" y="19" fontSize="15" fill="#333" className="font-['Noto_Sans']">b</text><text x="4" y="25" fontSize="14" fill="#444" fontStyle="italic" className="font-['Liberation_Serif']">C</text></> },
  { name: "To Do", art: <><rect x="2" width="24" height="28" rx="3" fill="#587cf0" /><path d="M5 7l3 3 4-5M5 21l3 3 4-5M15 7h8M15 21h8" fill="none" stroke="#3154b8" strokeWidth="1.500" /><path d="M5 14l3 3 4-5M15 14h8" fill="none" stroke="#fff" strokeWidth="1.600" /></> },
  { name: "Vim", art: <><path fill="#2d7d5c" d="M14-1l14 15-14 14L0 14z" /><path fill="#c9cccb" stroke="#222" strokeWidth=".6" d="M0 0h12v3l-2 1v11L18 4l-2-1V0h12v3L12 26H8L4 23V4L0 3z" /><text x="12" y="26" fontSize="13" fontWeight="700" fontStyle="italic" fill="#ddd" stroke="#222" strokeWidth=".4" className="font-['Liberation_Serif']">im</text></> },
  { name: "Boxes", art: <><rect width="28" height="28" rx="3" fill="#5f86f3" /><path fill="#a9c0fb" d="M9 10h16v13H9z" /><rect x="3" y="5" width="16" height="13" rx="1" fill="#fff" /></> },
  { name: "Restart", art: <><circle cx="14" cy="14" r="14" fill="#ee6026" /><path d="M8 12a6.500 6.500 0 1 0 7-5" fill="none" stroke="#fff" strokeWidth="3" /><path fill="#fff" d="M3 14l5-6 4 6z" /></> },
  { name: "Calc", art: <><path fill="#fff" stroke="#3f9d2b" strokeWidth="2" d="M3 1h14l7 8v18H3z" /><path fill="#1e7a12" d="M18 0h6v7z" /><path d="M6 12h14v11H6zM6 16h14M6 19h14M10.500 12v11M15 12v11" fill="none" stroke="#3a8f28" strokeWidth="1.500" /><path fill="#fff" d="M14 18h7v7h-7z" /><path d="M15.500 24v-3M17.500 24v-5M19.500 24v-4" stroke="#2f73b7" strokeWidth="1.300" /></> },
  { name: "Alert", art: <><circle cx="14" cy="14" r="14" fill="#e32442" /><path d="M14 5v12M14 20v2.500" stroke="#fff" strokeWidth="1.800" /></> },
  { name: "Music", art: <><path d="M7 25V4l17-3v21" fill="none" stroke="#fff" strokeWidth="2.500" /><path fill="#fff" d="M7 2l18-3v5L7 8z" /><circle cx="5" cy="25" r="4" fill="#fff" /><circle cx="22" cy="22" r="4" fill="#fff" /></> },
  { name: "Game", art: <><path fill="#d8200c" d="M8-2h11v2h5v3H5V0h3z" /><path fill="#efa043" d="M6 3h14v3h5v3h-3v3H9V9H5z" /><path fill="#6d5600" d="M5 3h5v3H8v3H5zM15 3h3v4h-3zM4 12h15v6H4z" /><path fill="#d8200c" d="M9 12h3v4h5v-3h2v8l3 4H7l-4 1 3-8z" /><path fill="#dce6f4" d="M12 15h8v4h-8z" /><path fill="#6d5600" d="M3 26h8v4H2zM16 26h8v4h-8z" /></> },
  { name: "Camera", art: <><rect y="2" width="28" height="25" rx="3" fill="#eee" /><circle cx="14" cy="14" r="9" fill="#3b3d42" /><circle cx="14" cy="14" r="7" fill="#8d62dc" /><circle cx="14" cy="13" r="4" fill="#5737b5" /><circle cx="24.500" cy="5" r="1" fill="#d33" /></> },
  { name: "GIMP", art: <><path fill="#6a6552" d="M3 12c4-5 11-2 16-4 3-2 4-5 6-7 1 7-1 14-5 17-6 4-13 2-15-2z" /><circle cx="3" cy="11" r="3" fill="#222" stroke="#888" /><circle cx="9" cy="10" r="3.200" fill="#fff" /><circle cx="15.500" cy="9.500" r="3.600" fill="#fff" /><circle cx="9.500" cy="10.500" r="1.300" /><circle cx="15.500" cy="10" r="1.400" /><path d="M17 16l8 7" stroke="#d9873c" strokeWidth="2.400" /><path d="M24 22l3 4" stroke="#bbb" strokeWidth="2" /></> },
  { name: "Calendar", art: <><rect width="28" height="28" rx="2" fill="#2b9c8c" /><path fill="#5fcdb5" d="M0 22h28v4c0 1-1 2-2 2H2c-1 0-2-1-2-2z" opacity=".6" /><text x="14" y="20" fontSize="16" textAnchor="middle" fill="#fff" className="font-['Noto_Sans']">28</text></> },
];

function Dock() {
  return (
    <nav aria-label="Dock" className="flex h-[52px] shrink-0 items-stretch bg-[linear-gradient(90deg,#171719,#1b161d_40%,#231826_85%,#1b161d)] pr-[18px]">
      {DOCK.map((d, i) => (
        <button key={d.name} aria-label={d.name} className="relative flex w-14 min-w-0 items-center justify-center">
          {i === 1 ? (
            <span className="flex h-12 w-12 items-center justify-center rounded-sm bg-[#454446]"><FirefoxLogo size="h-8 w-[30px]" /></span>
          ) : (
            <svg viewBox="0 0 28 28" className="size-7 overflow-visible" aria-hidden="true">{d.art}</svg>
          )}
          {d.dots && (
            <span className="absolute bottom-[2px] flex gap-[3px]">
              {Array.from({ length: d.dots }, (_, n) => <i key={n} className="size-1 rounded-full bg-[#e9541f]" />)}
            </span>
          )}
        </button>
      ))}
      <button aria-label="Show Applications" className="ml-auto grid grid-cols-3 place-content-center gap-1">
        {Array.from({ length: 9 }, (_, n) => <i key={n} className="size-1 rounded-[1px] bg-white" />)}
      </button>
    </nav>
  );
}

export default function App() {
  return (
    <div className="flex h-screen flex-col overflow-hidden bg-[#1c1c1c]">
      <DesktopBar />
      <TitleBar />
      <BrowserChrome />
      <SearchPage />
      <Dock />
    </div>
  );
}
